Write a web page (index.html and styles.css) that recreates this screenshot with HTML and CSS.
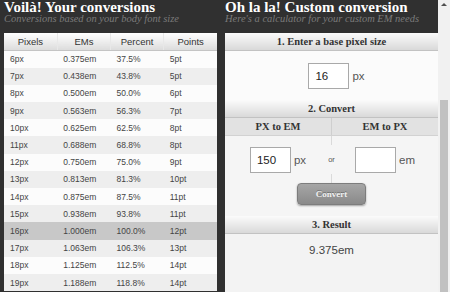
FILE: index.html
```html
<!DOCTYPE html>
<html lang="en">
<head>
  <meta charset="UTF-8" />
  <meta name="viewport" content="width=device-width, initial-scale=1.0"/>
  <title>EM Calculator</title>
  <link rel="stylesheet" href="styles.css">
</head>
<body>

  <div class="page">

    <section class="pane pane-left">
      <div class="pane-head">
        <h1>Voilà! Your conversions</h1>
        <p>Conversions based on your body font size</p>
      </div>
      <table class="conv">
        <thead>
          <tr><th>Pixels</th><th>EMs</th><th>Percent</th><th>Points</th></tr>
        </thead>
        <tbody>
          <tr><td>6px</td><td>0.375em</td><td>37.5%</td><td>5pt</td></tr>
          <tr><td>7px</td><td>0.438em</td><td>43.8%</td><td>5pt</td></tr>
          <tr><td>8px</td><td>0.500em</td><td>50.0%</td><td>6pt</td></tr>
          <tr><td>9px</td><td>0.563em</td><td>56.3%</td><td>7pt</td></tr>
          <tr><td>10px</td><td>0.625em</td><td>62.5%</td><td>8pt</td></tr>
          <tr><td>11px</td><td>0.688em</td><td>68.8%</td><td>8pt</td></tr>
          <tr><td>12px</td><td>0.750em</td><td>75.0%</td><td>9pt</td></tr>
          <tr><td>13px</td><td>0.813em</td><td>81.3%</td><td>10pt</td></tr>
          <tr><td>14px</td><td>0.875em</td><td>87.5%</td><td>11pt</td></tr>
          <tr><td>15px</td><td>0.938em</td><td>93.8%</td><td>11pt</td></tr>
          <tr class="current"><td>16px</td><td>1.000em</td><td>100.0%</td><td>12pt</td></tr>
          <tr><td>17px</td><td>1.063em</td><td>106.3%</td><td>13pt</td></tr>
          <tr><td>18px</td><td>1.125em</td><td>112.5%</td><td>14pt</td></tr>
          <tr><td>19px</td><td>1.188em</td><td>118.8%</td><td>14pt</td></tr>
        </tbody>
      </table>
    </section>

    <section class="pane pane-right">
      <div class="pane-head">
        <h1>Oh la la! Custom conversion</h1>
        <p>Here's a calculator for your custom EM needs</p>
      </div>

      <h2 class="bar">1. Enter a base pixel size</h2>
      <div class="base">
        <input type="text" class="num" value="16"> <span class="unit">px</span>
      </div>

      <h2 class="bar">2. Convert</h2>
      <div class="modes">
        <div class="mode">PX to EM</div>
        <div class="mode">EM to PX</div>
      </div>
      <div class="convert">
        <div class="fields">
          <div class="field">
            <input type="text" class="num" value="150"> <span class="unit">px</span>
          </div>
          <div class="or"><span>or</span></div>
          <div class="field">
            <input type="text" class="num" value=""> <span class="unit">em</span>
          </div>
        </div>
        <button class="go">Convert</button>
      </div>

      <h2 class="bar">3. Result</h2>
      <div class="result">9.375em</div>
    </section>

    <div class="scrollbar">
      <span class="arrow"></span>
      <span class="thumb"></span>
    </div>

  </div>

</body>
</html>
```

FILE: styles.css
```css
body {
  margin: 0;
  background: #303030;
  font-family: 'Liberation Sans', Arial, sans-serif;
  overflow: hidden;
}
.page {
  display: flex;
  height: 292px;
  padding-left: 4px;
  gap: 8px;
}
.pane {
  width: 213px;
  flex: none;
  display: flex;
  flex-direction: column;
}
.pane-head {
  height: 33px;
  flex: none;
}
.pane-head h1 {
  margin: 0;
  padding-top: 1px;
  font-family: 'Liberation Serif', Georgia, serif;
  font-weight: bold;
  font-size: 15px;
  line-height: 13px;
  color: #fff;
  white-space: nowrap;
}
.pane-head p {
  margin: 0;
  font-family: 'Liberation Serif', Georgia, serif;
  font-style: italic;
  font-size: 10.5px;
  line-height: 9px;
  color: #7a7a7a;
  white-space: nowrap;
}

/* conversion table */
.conv {
  width: 213px;
  border-collapse: collapse;
  table-layout: fixed;
  font-size: 8.5px;
  color: #444;
}
.conv th {
  height: 17px;
  padding: 0;
  font-weight: normal;
  font-size: 9.5px;
  color: #333;
  background: linear-gradient(#ffffff, #dcdcdc);
  border-left: 1px solid #e8e8e8;
  border-bottom: 1px solid #c4c4c4;
}
.conv th:first-child {
  border-left: none;
}
.conv td {
  height: 17.2px;
  padding: 0 0 0 6px;
  box-sizing: border-box;
}
.conv tbody tr:nth-child(odd) {
  background: #fcfcfc;
}
.conv tbody tr:nth-child(even) {
  background: #eeeeee;
}
.conv tbody tr.current {
  background: #c8c8c8;
}

/* calculator */
.pane-right {
  background: #f3f3f3;
}
.pane-right .pane-head {
  background: #303030;
}
.bar {
  margin: 0;
  height: 17px;
  line-height: 17px;
  flex: none;
  text-align: center;
  font-family: 'Liberation Serif', Georgia, serif;
  font-size: 10.5px;
  font-weight: bold;
  color: #333;
  background: linear-gradient(#fbfbfb, #d9d9d9);
  border-bottom: 1px solid #c2c2c2;
}
.base {
  height: 49px;
  display: flex;
  align-items: center;
  justify-content: center;
  background: #fbfbfb;
  padding-left: 10px;
  box-sizing: border-box;
}
.num {
  width: 41px;
  height: 26px;
  box-sizing: border-box;
  border: 1px solid #a9a9a9;
  background: #fff;
  padding: 0 0 0 6px;
  font-family: 'Liberation Sans', Arial, sans-serif;
  font-size: 11.5px;
  color: #222;
}
.unit {
  margin-left: 3px;
  font-size: 11.5px;
  color: #555;
}
.modes {
  display: flex;
  height: 17px;
  background: #e2e2e2;
  border-bottom: 1px solid #d2d2d2;
}
.mode {
  flex: 1;
  text-align: center;
  line-height: 17px;
  font-family: 'Liberation Serif', Georgia, serif;
  font-size: 10.5px;
  font-weight: bold;
  color: #333;
}
.mode:first-child {
  border-right: 1px solid #cfcfcf;
}
.convert {
  display: flex;
  flex-direction: column;
  align-items: center;
  padding-bottom: 11px;
  background: #f5f5f5;
}
.fields {
  display: flex;
  align-self: stretch;
  height: 47px;
}
.field {
  flex: 1;
  display: flex;
  align-items: center;
  justify-content: center;
}
.or {
  width: 1px;
  display: flex;
  flex-direction: column;
  align-items: center;
}
.or::before,
.or::after {
  content: '';
  flex: 1;
  width: 1px;
  background: #dadada;
}
.or span {
  padding: 10px 0;
  font-size: 7.5px;
  color: #555;
}
.go {
  width: 69px;
  height: 22px;
  border: 1px solid #7d7d7d;
  border-radius: 4px;
  background: linear-gradient(#a6a6a6, #8a8a8a);
  box-shadow: 0 1px 2px rgba(0,0,0,0.35);
  font-family: 'Liberation Serif', Georgia, serif;
  font-weight: bold;
  font-size: 9px;
  color: #f2f2f2;
  text-shadow: 0 -1px 0 rgba(0,0,0,0.3);
}
.result {
  flex: 1;
  padding-top: 9px;
  text-align: center;
  font-size: 11.5px;
  line-height: 14px;
  color: #444;
  background: #f3f3f3;
}

/* scrollbar of the calculator frame */
.scrollbar {
  width: 12px;
  flex: none;
  margin-left: -8px;
  background: #f1f1f1;
  display: flex;
  flex-direction: column;
  align-items: center;
}
.arrow {
  margin-top: 3px;
  width: 0;
  height: 0;
  border-left: 3px solid transparent;
  border-right: 3px solid transparent;
  border-bottom: 3px solid #505050;
}
.thumb {
  margin-top: auto;
  width: 8px;
  height: 192px;
  background: #c1c1c1;
}
```
